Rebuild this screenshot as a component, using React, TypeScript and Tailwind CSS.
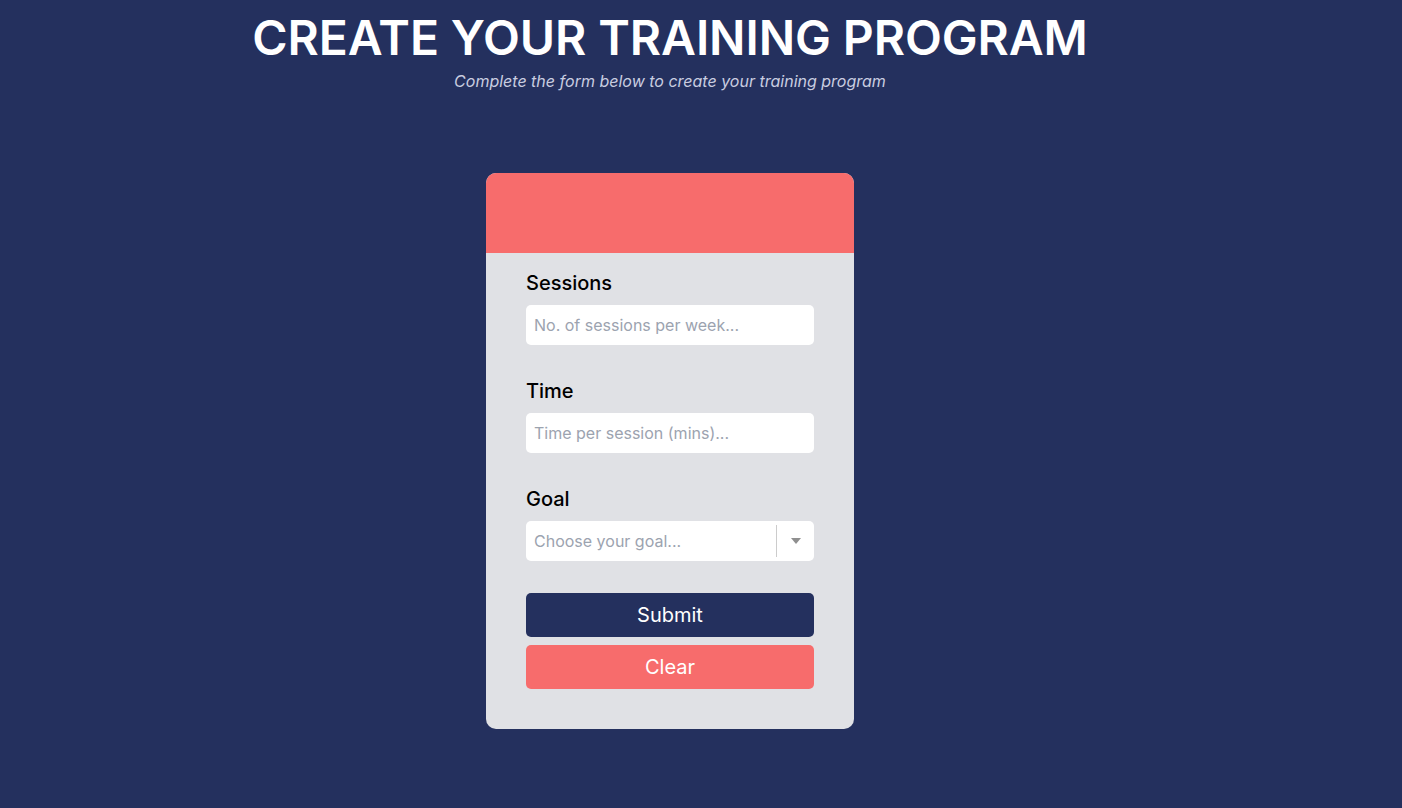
import { useState } from "react";

function Field({
  label,
  placeholder,
}: {
  label: string;
  placeholder: string;
}) {
  return (
    <div className="flex flex-col gap-2">
      <label className="text-[20px] leading-[28px] font-medium text-black">{label}</label>
      <input
        type="text"
        placeholder={placeholder}
        className="h-10 w-full rounded-[5px] bg-white px-2 text-base text-gray-800 outline-none placeholder:text-[#9ca3af]"
      />
    </div>
  );
}

export default function App() {
  const [goal, setGoal] = useState("");

  return (
    <main className="min-h-screen bg-[#24305e] font-['Inter',sans-serif] pr-[62px]">
      <header className="flex flex-col items-center pt-[14px]">
        <h1 className="text-5xl leading-none font-semibold tracking-[-0.1px] text-white">
          CREATE YOUR TRAINING PROGRAM
        </h1>
        <p className="mt-[7px] text-base leading-6 italic text-[#c9cde0]">
          Complete the form below to create your training program
        </p>
      </header>

      <div className="flex justify-center pt-20">
        <form className="w-[368px] overflow-hidden rounded-[10px] bg-[#e0e1e5]">
          <div className="h-20 bg-[#f76c6c]" />
          <div className="flex flex-col gap-8 px-10 pt-4 pb-10">
            <Field label="Sessions" placeholder="No. of sessions per week..." />
            <Field label="Time" placeholder="Time per session (mins)..." />

            <div className="flex flex-col gap-2">
              <label className="text-[20px] leading-[28px] font-medium text-black">Goal</label>
              <div className="flex h-10 items-center rounded-[5px] bg-white">
                <select
                  value={goal}
                  onChange={(e) => setGoal(e.target.value)}
                  className="h-full flex-1 appearance-none bg-transparent px-2 text-base text-[#9ca3af] outline-none"
                >
                  <option value="">Choose your goal...</option>
                  <option value="strength">Strength</option>
                  <option value="hypertrophy">Hypertrophy</option>
                  <option value="endurance">Endurance</option>
                </select>
                <span className="h-8 w-px bg-[#cccccc]" />
                <span className="flex w-[37px] justify-center">
                  <svg width="10" height="6" viewBox="0 0 10 6">
                    <path d="M0 0h10L5 6z" fill="#8f8f8f" />
                  </svg>
                </span>
              </div>
            </div>

            <div className="flex flex-col gap-2">
              <button
                type="submit"
                className="h-11 w-full rounded-[5px] bg-[#24305e] text-[20px] text-white"
              >
                Submit
              </button>
              <button
                type="reset"
                onClick={() => setGoal("")}
                className="h-11 w-full rounded-[5px] bg-[#f76c6c] text-[20px] text-white"
              >
                Clear
              </button>
            </div>
          </div>
        </form>
      </div>
    </main>
  );
}
